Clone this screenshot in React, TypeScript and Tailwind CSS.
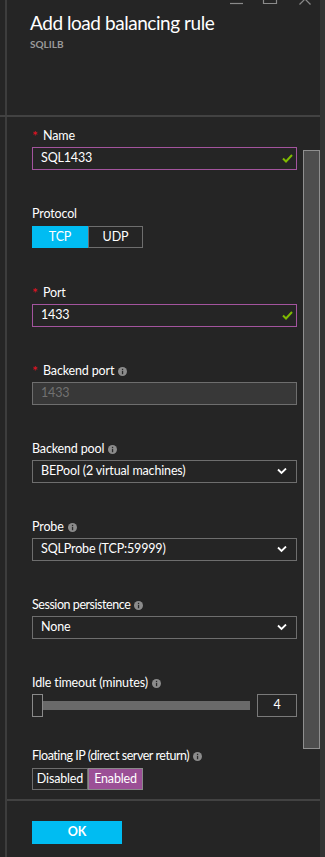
import React from "react";

const Info = () => (
  <svg width="9" height="9" viewBox="0 0 9 9" className="ml-[4px] shrink-0">
    <circle cx="4.5" cy="4.5" r="4.5" fill="#8c8c8c" />
    <rect x="3.9" y="3.9" width="1.3" height="3.3" fill="#2a2a2a" />
    <rect x="3.9" y="1.8" width="1.3" height="1.3" fill="#2a2a2a" />
  </svg>
);

const Check = () => (
  <svg width="11" height="9" viewBox="0 0 11 9" className="shrink-0">
    <polyline points="1,4.5 4,7.5 10,1" fill="none" stroke="#7fba00" strokeWidth="2" />
  </svg>
);

const Chevron = () => (
  <svg width="10" height="7" viewBox="0 0 10 7" className="shrink-0">
    <polyline points="1,1.5 4.5,5 9,0.5" fill="none" stroke="#ffffff" strokeWidth="1.8" />
  </svg>
);

const Label = ({
  required,
  info,
  tight,
  children,
}: {
  required?: boolean;
  info?: boolean;
  tight?: boolean;
  children: React.ReactNode;
}) => (
  <div className="h-[18px] pt-[2px] text-[12.5px] text-white flex items-center">
    {required && <span className="w-[11px] text-[14px] text-[#e81123] leading-[16px]">*</span>}
    <span className={tight ? "leading-[16px] tracking-[-0.45px]" : "leading-[16px] tracking-[-0.15px]"}>
      {children}
    </span>
    {info && <Info />}
  </div>
);

const TextInput = ({ value }: { value: string }) => (
  <div className="mt-[3px] h-[23px] w-[265px] border border-[#a3549e] flex items-center pl-[8px] pr-[3px] text-[12.5px] tracking-[-0.15px] text-white">
    <span className="flex-1">{value}</span>
    <Check />
  </div>
);

const Select = ({ value }: { value: string }) => (
  <div className="mt-[3px] h-[23px] w-[265px] border border-[#6e6e6e] flex items-center pl-[8px] pr-[9px] text-[12.5px] tracking-[-0.15px] text-white">
    <span className="flex-1">{value}</span>
    <Chevron />
  </div>
);

export default function App() {
  return (
    <div className="w-[325px] h-[857px] bg-[#252525] flex overflow-hidden relative font-['Lato','Open_Sans',sans-serif]">
      <svg className="absolute left-0 top-0" width="320" height="8" viewBox="0 0 320 8">
        <line x1="230" y1="3.5" x2="243" y2="3.5" stroke="#8a8a8a" strokeWidth="1.2" />
        <path d="M263.5,0 V3.5 H276.5 V0" fill="none" stroke="#8a8a8a" strokeWidth="1.2" />
        <line x1="299.5" y1="4.5" x2="310.5" y2="-6.5" stroke="#8a8a8a" strokeWidth="1.2" />
        <line x1="299.5" y1="-6.5" x2="310.5" y2="4.5" stroke="#8a8a8a" strokeWidth="1.2" />
      </svg>
      <div className="w-[320px] flex flex-col">
        <div className="h-[115px] pl-[5px] flex">
          <div className="flex-1 border-l-2 border-[#3d3d3d] pl-[23px] pt-[11px]">
            <div className="text-[19px] leading-[24px] font-normal tracking-[-0.45px] text-white">
              Add load balancing rule
            </div>
            <div className="text-[10px] leading-[12px] font-bold text-[#9a9a9a] mt-[3px]">SQLILB</div>
          </div>
        </div>
        <div className="h-[2px] bg-[#424242]" />
        <div className="flex-1 pl-[5px] flex">
          <div className="flex-1 border-l-2 border-[#3d3d3d] flex flex-col">
            <div className="h-[682px] flex">
              <div className="flex-1 pl-[25px] pt-[9px]">
                <Label required>Name</Label>
                <TextInput value="SQL1433" />

                <div className="mt-[34px]">
                  <Label>Protocol</Label>
                  <div className="mt-[4px] flex h-[22px] w-[111px] text-[12.5px] tracking-[-0.15px] text-white">
                    <div className="w-[56px] bg-[#00bcf2] flex items-center justify-center">TCP</div>
                    <div className="w-[55px] border border-[#6e6e6e] flex items-center justify-center">UDP</div>
                  </div>
                </div>

                <div className="mt-[35px]">
                  <Label required>Port</Label>
                  <TextInput value="1433" />
                </div>

                <div className="mt-[34px]">
                  <Label required info>
                    Backend port
                  </Label>
                  <div className="mt-[3px] h-[23px] w-[265px] border border-[#6e6e6e] bg-[#383838] flex items-center pl-[8px] text-[12.5px] tracking-[-0.15px] text-[#717171]">
                    1433
                  </div>
                </div>

                <div className="mt-[34px]">
                  <Label info>Backend pool</Label>
                  <Select value="BEPool (2 virtual machines)" />
                </div>

                <div className="mt-[34px]">
                  <Label info>Probe</Label>
                  <Select value="SQLProbe (TCP:59999)" />
                </div>

                <div className="mt-[34px]">
                  <Label info tight>
                    Session persistence
                  </Label>
                  <Select value="None" />
                </div>

                <div className="mt-[34px]">
                  <Label info>Idle timeout (minutes)</Label>
                  <div className="mt-[3px] h-[23px] w-[265px] flex items-center">
                    <div className="w-[11px] h-[23px] border border-[#8a8a8a]" />
                    <div className="w-[207px] h-[9px] bg-[#6a6a6a]" />
                    <div className="ml-[7px] w-[40px] h-[23px] border border-[#7a7a7a] flex items-center justify-center text-[12.5px] text-white">
                      4
                    </div>
                  </div>
                </div>

                <div className="mt-[29px]">
                  <Label info tight>
                    Floating IP (direct server return)
                  </Label>
                  <div className="mt-[4px] flex h-[22px] w-[111px] text-[12.5px] tracking-[-0.15px] text-white">
                    <div className="w-[56px] border border-[#6e6e6e] flex items-center justify-center">Disabled</div>
                    <div className="w-[55px] bg-[#9b4f96] border border-[#8a8a8a] flex items-center justify-center">
                      Enabled
                    </div>
                  </div>
                </div>
              </div>
              <div className="w-[17px] flex flex-col">
                <div className="mt-[33px] h-[599px] bg-[#4e4e4e] border border-[#8f8f8f]" />
              </div>
            </div>
            <div className="h-[2px] bg-[#424242]" />
            <div className="pl-[25px] pt-[20px]">
              <div className="w-[90px] h-[23px] bg-[#00bcf2] flex items-center justify-center text-[12.5px] font-bold text-white">
                OK
              </div>
            </div>
          </div>
        </div>
      </div>
      <div className="w-[5px] bg-[#333333]" />
    </div>
  );
}
